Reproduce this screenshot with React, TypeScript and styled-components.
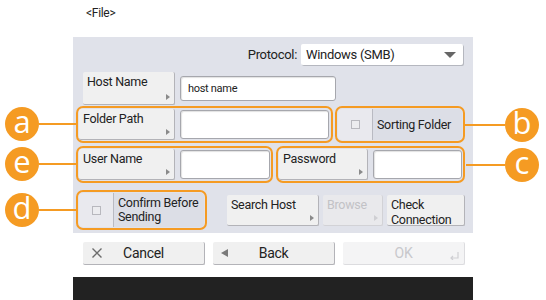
import React from 'react';
import styled, { createGlobalStyle, css } from 'styled-components';

const orange = '#f59b23';
const panelBg = '#e0e2ea';
const font = `'Roboto', 'Noto Sans', sans-serif`;

const GlobalStyle = createGlobalStyle`
    body {
        margin: 0;
        background: #fff;
        font-family: ${font};
        letter-spacing: -0.3px;
        color: #222;
    }
`;

const Screen = styled.div`
    position: relative;
    width: 546px;
    height: 300px;
    overflow: hidden;
    display: flex;
    flex-direction: column;
`;

const Title = styled.div`
    height: 37px;
    padding-left: 86px;
    font-size: 12px;
    line-height: 26px;
`;

const Panel = styled.div`
    margin-left: 73px;
    width: 400px;
    height: 196px;
    background: ${panelBg};
    display: flex;
    flex-direction: column;
`;

const ProtocolRow = styled.div`
    display: flex;
    justify-content: flex-end;
    align-items: center;
    gap: 4px;
    height: 21px;
    margin-top: 7px;
    padding-right: 10px;
    font-size: 13px;
`;

const Select = styled.div`
    box-sizing: border-box;
    width: 162px;
    height: 21px;
    display: flex;
    align-items: center;
    justify-content: space-between;
    padding: 0 7px 0 5px;
    background: #fff;
    border-radius: 2px;
    box-shadow: 1px 1px 0 #b5b7bf;
`;

const Caret = styled.span`
    width: 0;
    height: 0;
    border-top: 6px solid #666;
    border-left: 6px solid transparent;
    border-right: 6px solid transparent;
`;

const FieldRow = styled.div<{ $top: number; $left: number; $h: number; $gap?: number }>`
    display: flex;
    align-items: center;
    gap: ${(p) => p.$gap ?? 2}px;
    height: ${(p) => p.$h}px;
    margin-top: ${(p) => p.$top}px;
    padding-left: ${(p) => p.$left}px;
`;

const KeyGroup = styled.div`
    display: flex;
    align-items: center;
    gap: 4px;
    margin-left: 18px;
`;

const Ring = styled.div<{ $w: number }>`
    box-sizing: border-box;
    width: ${(p) => p.$w}px;
    height: 100%;
    display: flex;
    align-items: stretch;
    gap: 5px;
    padding: 1px;
    border: 2px solid ${orange};
    border-radius: 7px;
`;

const Key = styled.div<{ $w: number; $h?: number; $off?: boolean }>`
    position: relative;
    box-sizing: border-box;
    width: ${(p) => p.$w}px;
    height: ${(p) => (p.$h ? `${p.$h}px` : '100%')};
    flex-shrink: 0;
    padding: 2px 4px;
    background: #f0f0f0;
    border-right: 1px solid #b3b3b8;
    border-bottom: 1px solid #b3b3b8;
    border-radius: 2px;
    font-size: 12.5px;
    line-height: 15px;
    white-space: nowrap;

    ${(p) =>
        p.$off &&
        css`
            background: #e9e9ec;
            color: #c2c2c6;
            border-color: #d2d2d6;
        `}
`;

const Arrow = styled.span<{ $dim?: boolean }>`
    position: absolute;
    right: 4px;
    bottom: 4px;
    width: 0;
    height: 0;
    border-left: 4px solid ${(p) => (p.$dim ? '#cfcfd3' : '#8a8a8a')};
    border-top: 3px solid transparent;
    border-bottom: 3px solid transparent;
`;

const Field = styled.div<{ $w: number; $h: number }>`
    box-sizing: border-box;
    width: ${(p) => p.$w}px;
    height: ${(p) => p.$h}px;
    align-self: center;
    display: flex;
    align-items: center;
    padding-left: 7px;
    background: #fff;
    border: 1px solid #a6a7ad;
    border-radius: 3px;
    box-shadow: inset 1px 1px 1px rgba(0, 0, 0, 0.12);
    font-size: 11px;
`;

const CheckTile = styled.div`
    flex: 1;
    display: flex;
    background: #dcdee6;
    border-radius: 4px;
    overflow: hidden;
`;

const CheckCell = styled.div<{ $w: number }>`
    width: ${(p) => p.$w}px;
    flex-shrink: 0;
    display: flex;
    align-items: center;
    justify-content: center;
    background: #e9e9ee;
    border-right: 1px solid #b9bac2;
`;

const Box = styled.span`
    width: 7px;
    height: 7px;
    border: 1px solid #b8b8be;
    background: #ececef;
`;

const CheckLabel = styled.div`
    flex: 1;
    display: flex;
    align-items: center;
    padding-left: 4px;
    font-size: 12.5px;
    line-height: 14px;
    white-space: nowrap;
`;

const Footer = styled.div`
    display: flex;
    gap: 8px;
    height: 23px;
    margin: 9px 0 0 83px;
`;

const BigKey = styled.div<{ $off?: boolean }>`
    position: relative;
    box-sizing: border-box;
    width: 122px;
    display: flex;
    align-items: center;
    justify-content: center;
    background: ${(p) => (p.$off ? '#f4f4f5' : '#f0f0f0')};
    color: ${(p) => (p.$off ? '#c8c8cc' : '#222')};
    border-right: 1px solid ${(p) => (p.$off ? '#dcdcdf' : '#b3b3b8')};
    border-bottom: 1px solid ${(p) => (p.$off ? '#dcdcdf' : '#b3b3b8')};
    border-radius: 2px;
    font-size: 14px;
`;

const KeyIcon = styled.span`
    position: absolute;
    left: 8px;
    top: 50%;
    transform: translateY(-50%);
    display: flex;
    color: #6c6c6c;
`;

const EnterMark = styled.span`
    position: absolute;
    right: 5px;
    bottom: 4px;
    display: flex;
`;

const BackTri = styled.span`
    width: 0;
    height: 0;
    border-right: 7px solid #7a7a7a;
    border-top: 4px solid transparent;
    border-bottom: 4px solid transparent;
`;

const DarkBar = styled.div`
    margin: 12px 0 0 73px;
    width: 400px;
    flex: 1;
    background: #222;
`;

const Callout = styled.div<{ $x: number; $y: number; $right?: boolean }>`
    position: absolute;
    left: ${(p) => p.$x}px;
    top: ${(p) => p.$y}px;
    display: flex;
    align-items: center;
    flex-direction: ${(p) => (p.$right ? 'row' : 'row-reverse')};
`;

const Badge = styled.span`
    width: 34px;
    height: 34px;
    border-radius: 50%;
    background: ${orange};
    color: #fff;
    display: flex;
    align-items: center;
    justify-content: center;
    font-family: 'Open Sans', 'Noto Sans', sans-serif;
    font-size: 31px;
    letter-spacing: 0;
    line-height: 1;
    padding-bottom: 5px;
    box-sizing: border-box;
`;

const Leader = styled.span<{ $len: number }>`
    width: ${(p) => p.$len}px;
    height: 2px;
    background: ${orange};
`;

const callouts = [
    { id: 'a', x: 5, y: 107, len: 37 },
    { id: 'e', x: 5, y: 147, len: 37 },
    { id: 'd', x: 5, y: 193, len: 37 },
    { id: 'b', x: 465, y: 108, len: 40, right: true },
    { id: 'c', x: 466, y: 148, len: 39, right: true },
];

const App = () => {
    return (
        <Screen>
            <GlobalStyle />
            <Title>&lt;File&gt;</Title>

            <Panel>
                <ProtocolRow>
                    <span>Protocol:</span>
                    <Select>
                        <span>Windows (SMB)</span>
                        <Caret />
                    </Select>
                </ProtocolRow>

                <FieldRow $top={7} $left={10} $h={33} $gap={5}>
                    <Key $w={92}>
                        Host Name
                        <Arrow />
                    </Key>
                    <Field $w={156} $h={25}>host name</Field>
                </FieldRow>

                <FieldRow $top={1} $left={3} $h={37}>
                    <Ring $w={257}>
                        <Key $w={96}>
                            Folder Path
                            <Arrow />
                        </Key>
                        <Field $w={149} $h={29}></Field>
                    </Ring>
                    <Ring $w={130}>
                        <CheckTile>
                            <CheckCell $w={34}>
                                <Box />
                            </CheckCell>
                            <CheckLabel>Sorting Folder</CheckLabel>
                        </CheckTile>
                    </Ring>
                </FieldRow>

                <FieldRow $top={3} $left={3} $h={37} $gap={3}>
                    <Ring $w={197}>
                        <Key $w={96}>
                            User Name
                            <Arrow />
                        </Key>
                        <Field $w={90} $h={29}></Field>
                    </Ring>
                    <Ring $w={189}>
                        <Key $w={89}>
                            Password
                            <Arrow />
                        </Key>
                        <Field $w={90} $h={29}></Field>
                    </Ring>
                </FieldRow>

                <FieldRow $top={7} $left={3} $h={40}>
                    <Ring $w={131}>
                        <CheckTile>
                            <CheckCell $w={34}>
                                <Box />
                            </CheckCell>
                            <CheckLabel>
                                Confirm Before
                                <br />
                                Sending
                            </CheckLabel>
                        </CheckTile>
                    </Ring>
                    <KeyGroup>
                        <Key $w={92} $h={31}>
                            Search Host
                            <Arrow />
                        </Key>
                        <Key $w={60} $h={31} $off>
                            Browse
                            <Arrow $dim />
                        </Key>
                        <Key $w={78} $h={31}>
                            Check
                            <br />
                            Connection
                        </Key>
                    </KeyGroup>
                </FieldRow>
            </Panel>

            <Footer>
                <BigKey>
                    <KeyIcon>
                        <svg width="12" height="12" viewBox="0 0 12 12">
                            <path d="M1.5 1.5 L10.5 10.5 M10.5 1.5 L1.5 10.5" stroke="#6c6c6c" strokeWidth="1.4" />
                        </svg>
                    </KeyIcon>
                    Cancel
                </BigKey>
                <BigKey>
                    <KeyIcon>
                        <BackTri />
                    </KeyIcon>
                    Back
                </BigKey>
                <BigKey $off>
                    OK
                    <EnterMark>
                        <svg width="10" height="8" viewBox="0 0 10 8">
                            <path d="M9 0 V6 H2 M4 4 L2 6 L4 8" stroke="#cfcfd3" strokeWidth="1.2" fill="none" />
                        </svg>
                    </EnterMark>
                </BigKey>
            </Footer>

            <DarkBar />

            {callouts.map((c) => (
                <Callout key={c.id} $x={c.x} $y={c.y} $right={c.right}>
                    <Leader $len={c.len} />
                    <Badge>{c.id}</Badge>
                </Callout>
            ))}
        </Screen>
    );
};

export default App;
